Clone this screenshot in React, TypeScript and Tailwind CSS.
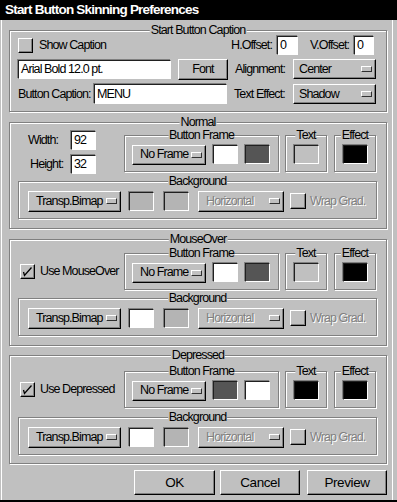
import React from 'react';

const raised =
  'border border-t-white border-l-white border-b-black border-r-black shadow-[inset_-1px_-1px_0_#808080]';
const sunken =
  'border border-t-[#202020] border-l-[#202020] border-b-white border-r-white shadow-[-1px_-1px_0_#808080]';

const Group: React.FC<{ title: string; className?: string; children?: React.ReactNode }> = ({
  title,
  className = '',
  children,
}) => (
  <div className={`relative border border-[#808080] shadow-[inset_1px_1px_0_#fff,1px_1px_0_#fff] ${className}`}>
    <span className="absolute left-1/2 top-[-8px] -translate-x-1/2 bg-[#c0c0c0] px-px leading-[14px]">
      {title}
    </span>
    {children}
  </div>
);

const Field: React.FC<{ value: string; className?: string }> = ({ value, className = '' }) => (
  <div className={`flex items-center bg-white pl-[2px] ${sunken} ${className}`}>{value}</div>
);

const Swatch: React.FC<{ color: string; className?: string }> = ({ color, className = '' }) => (
  <div className={`h-[19px] w-[25px] ${sunken} ${className}`} style={{ backgroundColor: color }} />
);

const Dropdown: React.FC<{ label: string; className?: string; pl?: string; disabled?: boolean }> = ({
  label,
  className = '',
  pl = 'pl-[7px]',
  disabled,
}) => (
  <div className={`flex items-center justify-between bg-[#c0c0c0] pr-[3px] ${pl} ${raised} ${className}`}>
    <span className={disabled ? 'text-[#808080] [text-shadow:1px_1px_0_#fff]' : ''}>{label}</span>
    <span className="h-[6px] w-[11px] border border-t-white border-l-white border-b-[#303030] border-r-[#303030] bg-[#c0c0c0]" />
  </div>
);

const Button: React.FC<{ label: string; className?: string }> = ({ label, className = '' }) => (
  <div className={`flex items-center justify-center bg-[#c0c0c0] ${raised} ${className}`}>{label}</div>
);

const Checkbox: React.FC<{ checked?: boolean; className?: string }> = ({ checked, className = '' }) => (
  <div className={`flex h-[15px] w-[15px] shrink-0 items-center justify-center bg-[#c0c0c0] ${raised} ${className}`}>
    {checked && (
      <svg width="13" height="13" viewBox="0 0 13 13">
        <path d="M2.5 7 L3.5 10.5 L10.5 2.5" fill="none" stroke="#000" strokeWidth="1.3" />
      </svg>
    )}
  </div>
);

interface StateProps {
  title: string;
  left: React.ReactNode;
  leftCenter?: boolean;
  frame: [string, string];
  text: string;
  effect: string;
  bg1: string;
  className: string;
  bgGap: string;
  subTop?: string;
}

const StateGroup: React.FC<StateProps> = ({ title, left, leftCenter, frame, text, effect, bg1, className, bgGap, subTop = '' }) => (
  <Group title={title} className={`pl-[8px] ${className}`}>
    <div className="flex items-start">
      <div className={`w-[106px] ${leftCenter ? 'flex h-[37px] items-center pl-[2px]' : ''}`}>{left}</div>
      <Group title="Button Frame" className={`flex h-[37px] w-[155px] items-center pl-[7px] pt-[2px] ${subTop}`}>
        <Dropdown label="No Frame" className="h-[20px] w-[74px]" />
        <Swatch color={frame[0]} className="ml-[7px]" />
        <Swatch color={frame[1]} className="ml-[7px]" />
      </Group>
      <Group title="Text" className={`ml-[6px] flex h-[37px] w-[42px] items-center justify-center pt-[2px] ${subTop}`}>
        <Swatch color={text} />
      </Group>
      <Group title="Effect" className={`ml-[7px] flex h-[37px] w-[42px] items-center justify-center pt-[2px] ${subTop}`}>
        <Swatch color={effect} />
      </Group>
    </div>
    <Group title="Background" className={`flex h-[38px] w-[359px] items-center pl-[9px] pt-[2px] ${bgGap}`}>
      <Dropdown label="Transp.Bimap" className="h-[21px] w-[93px]" />
      <Swatch color={bg1} className="ml-[8px]" />
      <Swatch color="#b4b4b4" className="ml-[10px]" />
      <Dropdown label="Horizontal" disabled className="ml-[9px] h-[21px] w-[86px]" />
      <Checkbox className="ml-[6px] !h-[16px] !w-[16px]" />
      <span className="ml-[4px] text-[#808080] [text-shadow:1px_1px_0_#fff]">Wrap Grad.</span>
    </Group>
  </Group>
);

export default function App() {
  return (
    <div className="flex h-[502px] w-[397px] flex-col whitespace-nowrap border-b-2 border-b-black bg-[#c0c0c0] font-['Liberation_Sans',Arial,sans-serif] text-[12.5px] leading-none tracking-[-0.9px] text-black shadow-[inset_1px_0_0_#c0c0c0,inset_2px_0_0_#fff,inset_-4px_0_0_#c0c0c0,inset_-5px_0_0_#fff]">
      <div className="flex h-[20px] shrink-0 items-center bg-black pl-[5px] text-[13.5px] font-bold tracking-[-0.8px] text-white">
        Start Button Skinning Preferences
      </div>

      <div className="flex flex-col pl-[9px] pr-[10px]">
        {/* caption */}
        <Group title="Start Button Caption" className="mt-[10px] h-[82px] pl-[8px] pt-[5px]">
          <div className="flex h-[19px] items-center">
            <div className="flex w-[213px] items-center">
              <Checkbox />
              <span className="ml-[6px]">Show Caption</span>
            </div>
            <span className="w-[46px]">H.Offset:</span>
            <Field value="0" className="h-[19px] w-[21px]" />
            <span className="ml-[12px] w-[44px]">V.Offset:</span>
            <Field value="0" className="h-[19px] w-[20px]" />
          </div>
          <div className="mt-[3px] flex h-[22px] items-center">
            <Field value="Arial Bold 12.0 pt." className="h-[19px] w-[153px]" />
            <Button label="Font" className="ml-[7px] h-[21px] w-[50px]" />
            <span className="ml-[7px] w-[58px]">Alignment:</span>
            <Dropdown label="Center" pl="pl-[5px]" className="h-[20px] w-[83px]" />
          </div>
          <div className="mt-[3px] flex h-[22px] items-center">
            <span className="w-[76px]">Button Caption:</span>
            <Field value="MENU" className="h-[20px] w-[133px]" />
            <span className="ml-[7px] w-[59px]">Text Effect:</span>
            <Dropdown label="Shadow" pl="pl-[5px]" className="h-[20px] w-[83px]" />
          </div>
        </Group>

        <StateGroup
          title="Normal"
          className="mt-[10px] h-[107px] pt-[8px]"
          subTop="mt-[4px]"
          bgGap="mt-[7px]"
          frame={['#ffffff', '#555555']}
          text="#c0c0c0"
          effect="#000000"
          bg1="#b4b4b4"
          left={
            <div>
              <div className="flex items-center">
                <span className="w-[53px] pl-[10px]">Width:</span>
                <Field value="92" className="h-[19px] w-[25px]" />
              </div>
              <div className="mt-[5px] flex items-center">
                <span className="w-[53px] pl-[12px]">Height:</span>
                <Field value="32" className="h-[19px] w-[25px]" />
              </div>
            </div>
          }
        />

        <StateGroup
          title="MouseOver"
          className="mt-[10px] h-[107px] pt-[13px]"
          bgGap="mt-[8px]"
          leftCenter
          frame={['#ffffff', '#555555']}
          text="#c0c0c0"
          effect="#000000"
          bg1="#ffffff"
          left={
            <>
              <Checkbox checked />
              <span className="ml-[5px]">Use MouseOver</span>
            </>
          }
        />

        <StateGroup
          title="Depressed"
          className="mt-[9px] h-[109px] pt-[15px]"
          bgGap="mt-[9px]"
          leftCenter
          frame={['#555555', '#ffffff']}
          text="#000000"
          effect="#000000"
          bg1="#ffffff"
          left={
            <>
              <Checkbox checked />
              <span className="ml-[5px]">Use Depressed</span>
            </>
          }
        />

        <div className="mt-[6px] flex justify-end text-[13.5px] tracking-[-0.4px]">
          <Button label="OK" className="h-[25px] w-[81px]" />
          <Button label="Cancel" className="ml-[5px] h-[25px] w-[80px]" />
          <Button label="Preview" className="ml-[7px] h-[25px] w-[80px]" />
        </div>
      </div>
    </div>
  );
}
